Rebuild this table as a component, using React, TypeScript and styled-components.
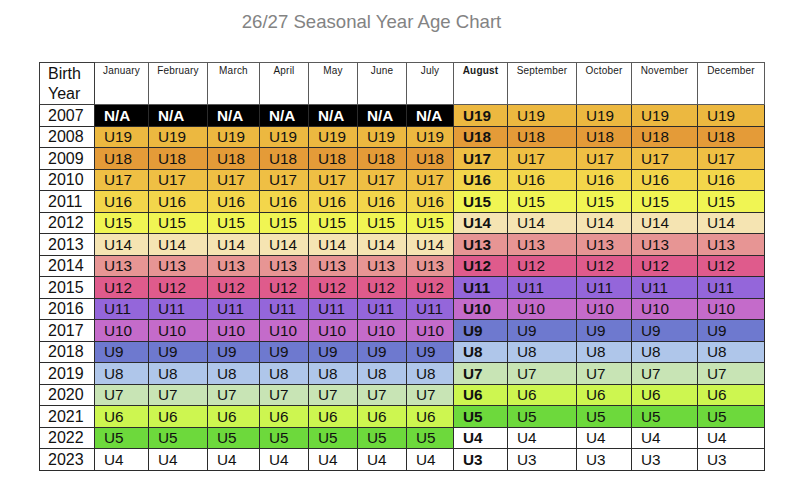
import React from "react";
import styled, { createGlobalStyle } from "styled-components";

const GlobalStyle = createGlobalStyle`
  body {
    margin: 0;
    background: #ffffff;
    font-family: "Liberation Sans", Arial, sans-serif;
  }
`;

const MONTHS = [
  "January",
  "February",
  "March",
  "April",
  "May",
  "June",
  "July",
  "August",
  "September",
  "October",
  "November",
  "December",
];

// width of each column in px, first one is the birth year
const COL_WIDTHS = [55, 54, 59, 52, 49, 49, 49, 47, 54, 69, 55, 66, 67];

const AGE_COLORS: Record<number, string> = {
  19: "#ecb840",
  18: "#e49b38",
  17: "#efbf44",
  16: "#f3d64b",
  15: "#f0f553",
  14: "#f5e4b2",
  13: "#e79594",
  12: "#df5b8c",
  11: "#9466da",
  10: "#c46bca",
  9: "#6e79cf",
  8: "#afc6ea",
  7: "#c8e4b5",
  6: "#cdf650",
  5: "#6dd93c",
  4: "#ffffff",
  3: "#ffffff",
};

const AUGUST = 7;

function ageFor(year: number, monthIdx: number) {
  // Jan-Jul count one year older than Aug-Dec
  return monthIdx < AUGUST ? 2027 - year : 2026 - year;
}

function App() {
  const years = Array.from({ length: 17 }, (_, i) => 2007 + i);

  return (
    <>
      <GlobalStyle />
      <SPage>
        <STitle>26/27 Seasonal Year Age Chart</STitle>
        <STable>
          <colgroup>
            {COL_WIDTHS.map((w, i) => (
              <col key={i} style={{ width: w }} />
            ))}
          </colgroup>
          <thead>
            <SHeadRow>
              <SYearHead>
                Birth
                <br />
                Year
              </SYearHead>
              {MONTHS.map((m, i) => (
                <SMonthHead key={m} $bold={i === AUGUST}>
                  {m}
                </SMonthHead>
              ))}
            </SHeadRow>
          </thead>
          <tbody>
            {years.map((year) => (
              <SRow key={year}>
                <SYearCell>{year}</SYearCell>
                {MONTHS.map((m, i) => {
                  const age = ageFor(year, i);
                  if (age > 19) {
                    return (
                      <SAgeCell key={m} $bg="#000000" $color="#ffffff" $bold>
                        N/A
                      </SAgeCell>
                    );
                  }
                  return (
                    <SAgeCell
                      key={m}
                      $bg={AGE_COLORS[age]}
                      $color="#111111"
                      $bold={i === AUGUST}
                    >
                      U{age}
                    </SAgeCell>
                  );
                })}
              </SRow>
            ))}
          </tbody>
        </STable>
      </SPage>
    </>
  );
}

const SPage = styled.div`
  width: 793px;
  height: 492px;
  padding: 11px 0 0 39px;
  box-sizing: border-box;
  display: flex;
  flex-direction: column;
  overflow: hidden;
`;

const STitle = styled.h1`
  margin: 0 0 29px -39px;
  padding-right: 50px;
  font-size: 18.6px;
  line-height: 22px;
  font-weight: 400;
  color: #838383;
  text-align: center;
  font-family: "Liberation Sans", Arial, sans-serif;
`;

const STable = styled.table`
  width: 725px;
  table-layout: fixed;
  border-collapse: collapse;
  border: 1.5px solid #2b2b2b;
`;

const SHeadRow = styled.tr`
  height: 41px;
`;

const SYearHead = styled.th`
  text-align: left;
  vertical-align: top;
  padding: 1px 0 0 8px;
  font-size: 16px;
  line-height: 20px;
  font-weight: 400;
  color: #111111;
  border: 1px solid #3a3a3a;
`;

const SMonthHead = styled.th<{ $bold?: boolean }>`
  text-align: center;
  vertical-align: top;
  padding: 2px 0 0;
  font-size: 10px;
  line-height: 12px;
  letter-spacing: 0.2px;
  font-weight: ${(p) => (p.$bold ? 700 : 400)};
  color: #1a1a1a;
  white-space: nowrap;
  border: 1px solid #5a5a5a;
`;

const SRow = styled.tr`
  height: 21.5px;
`;

const SYearCell = styled.td`
  padding: 0 0 0 8px;
  font-size: 16px;
  line-height: 19px;
  color: #111111;
  background: #ffffff;
  border: 1px solid #2b2b2b;
`;

const SAgeCell = styled.td<{ $bg: string; $color: string; $bold?: boolean }>`
  padding: 0 0 0 9px;
  font-size: 15.3px;
  line-height: 19px;
  color: ${(p) => p.$color};
  background: ${(p) => p.$bg};
  font-weight: ${(p) => (p.$bold ? 700 : 400)};
  white-space: nowrap;
  border: 1px solid #2b2b2b;
`;

export default App;
